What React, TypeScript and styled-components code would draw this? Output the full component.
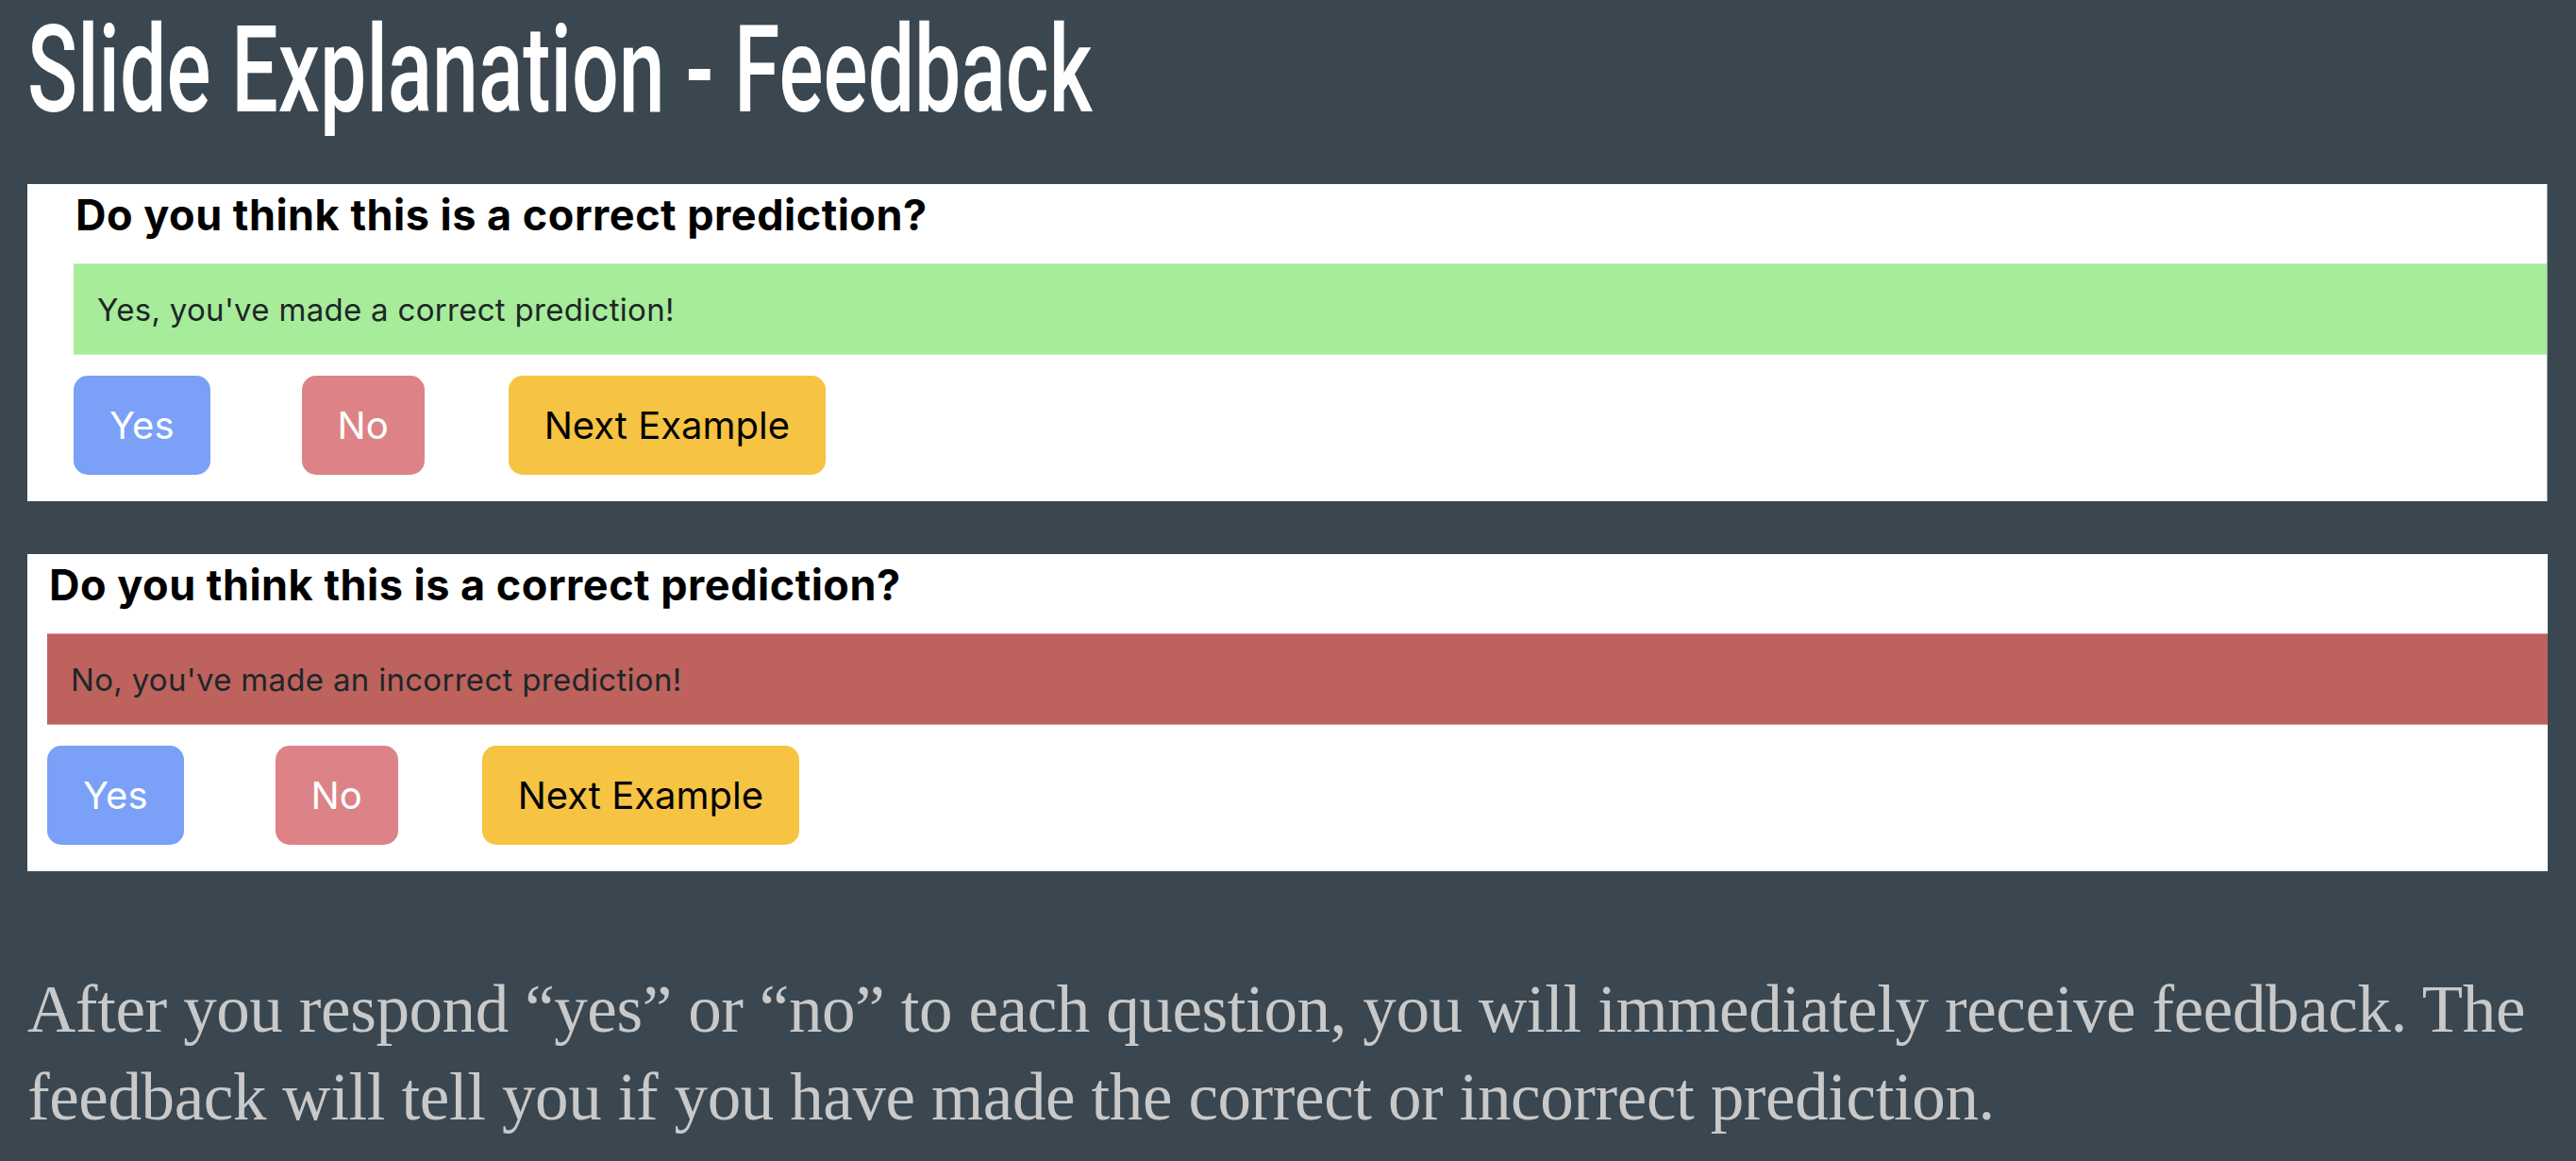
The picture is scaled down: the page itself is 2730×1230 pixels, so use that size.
import React from "react";
import styled, { createGlobalStyle } from "styled-components";

const GlobalStyle = createGlobalStyle`
  html, body {
    margin: 0;
    padding: 0;
    background: #3b4750;
  }
  body {
    width: 2730px;
    height: 1230px;
    overflow: hidden;
  }
`;

const Slide = styled.main`
  box-sizing: border-box;
  width: 2730px;
  height: 1230px;
  padding: 10px 30px 0 29px;
  background: #3b4750;
  display: flex;
  flex-direction: column;
`;

const Title = styled.h1`
  margin: 0 0 57px;
  font-family: Roboto, "Liberation Sans", sans-serif;
  font-weight: 500;
  font-size: 128px;
  line-height: 128px;
  color: #ffffff;
  white-space: nowrap;
  transform: scaleX(0.686);
  transform-origin: left center;
`;

const PanelStack = styled.div`
  display: flex;
  flex-direction: column;
  gap: 56px;
`;

const Panel = styled.section<{ $inset: number; $edge?: boolean }>`
  box-sizing: border-box;
  height: 336px;
  background: #ffffff;
  padding: 6px 0 28px ${(p) => p.$inset}px;
  display: flex;
  flex-direction: column;
  border-right: ${(p) => (p.$edge ? "1px solid #9a9a9a" : "none")};
`;

const Question = styled.h2`
  margin: 0 0 24px;
  padding-left: 2px;
  font-family: Inter, "Liberation Sans", sans-serif;
  font-weight: 700;
  font-size: 45px;
  line-height: 54px;
  letter-spacing: 0.5px;
  color: #000000;
  white-space: nowrap;
`;

const Alert = styled.div<{ $bg: string; $line: string }>`
  box-sizing: border-box;
  height: 97px;
  display: flex;
  align-items: center;
  padding-left: 25px;
  background: ${(p) => p.$bg};
  border-top: 1px solid ${(p) => p.$line};
  border-bottom: 1px solid ${(p) => p.$line};
  font-family: Inter, "Liberation Sans", sans-serif;
  font-size: 33px;
  letter-spacing: 0.3px;
  color: #1e2628;
  white-space: nowrap;
`;

const ButtonRow = styled.div`
  margin-top: 22px;
  display: flex;
  align-items: center;
`;

const Button = styled.button<{ $bg: string; $fg: string; $after: number }>`
  box-sizing: border-box;
  height: 105px;
  padding: 0 38px;
  margin: 0 ${(p) => p.$after}px 0 0;
  border: none;
  border-radius: 15px;
  background: ${(p) => p.$bg};
  color: ${(p) => p.$fg};
  font-family: Inter, "Liberation Sans", sans-serif;
  font-size: 40px;
  line-height: 1;
  cursor: pointer;
`;

const Paragraph = styled.p`
  margin: 100px 0 0;
  font-family: "Liberation Serif", "DejaVu Serif", serif;
  font-size: 71px;
  line-height: 93px;
  letter-spacing: -0.4px;
  color: #c9c9c9;
  white-space: nowrap;
`;

type FeedbackProps = {
  inset: number;
  edge?: boolean;
  message: string;
  bg: string;
  line: string;
};

function FeedbackPanel({ inset, edge, message, bg, line }: FeedbackProps) {
  return (
    <Panel $inset={inset} $edge={edge}>
      <Question>Do you think this is a correct prediction?</Question>
      <Alert $bg={bg} $line={line}>
        {message}
      </Alert>
      <ButtonRow>
        <Button $bg="#7aa1f7" $fg="#ffffff" $after={97}>
          Yes
        </Button>
        <Button $bg="#dd8387" $fg="#ffffff" $after={89}>
          No
        </Button>
        <Button $bg="#f6c343" $fg="#000000" $after={0}>
          Next Example
        </Button>
      </ButtonRow>
    </Panel>
  );
}

export default function App() {
  return (
    <>
      <GlobalStyle />
      <Slide>
        <Title>Slide Explanation - Feedback</Title>
        <PanelStack>
          <FeedbackPanel
            inset={49}
            edge
            message="Yes, you've made a correct prediction!"
            bg="#a7ec9a"
            line="#c9f3c0"
          />
          <FeedbackPanel
            inset={21}
            message="No, you've made an incorrect prediction!"
            bg="#bd625d"
            line="#d49894"
          />
        </PanelStack>
        <Paragraph>
          After you respond “yes” or “no” to each question, you will immediately receive feedback. The
          <br />
          feedback will tell you if you have made the correct or incorrect prediction.
        </Paragraph>
      </Slide>
    </>
  );
}
